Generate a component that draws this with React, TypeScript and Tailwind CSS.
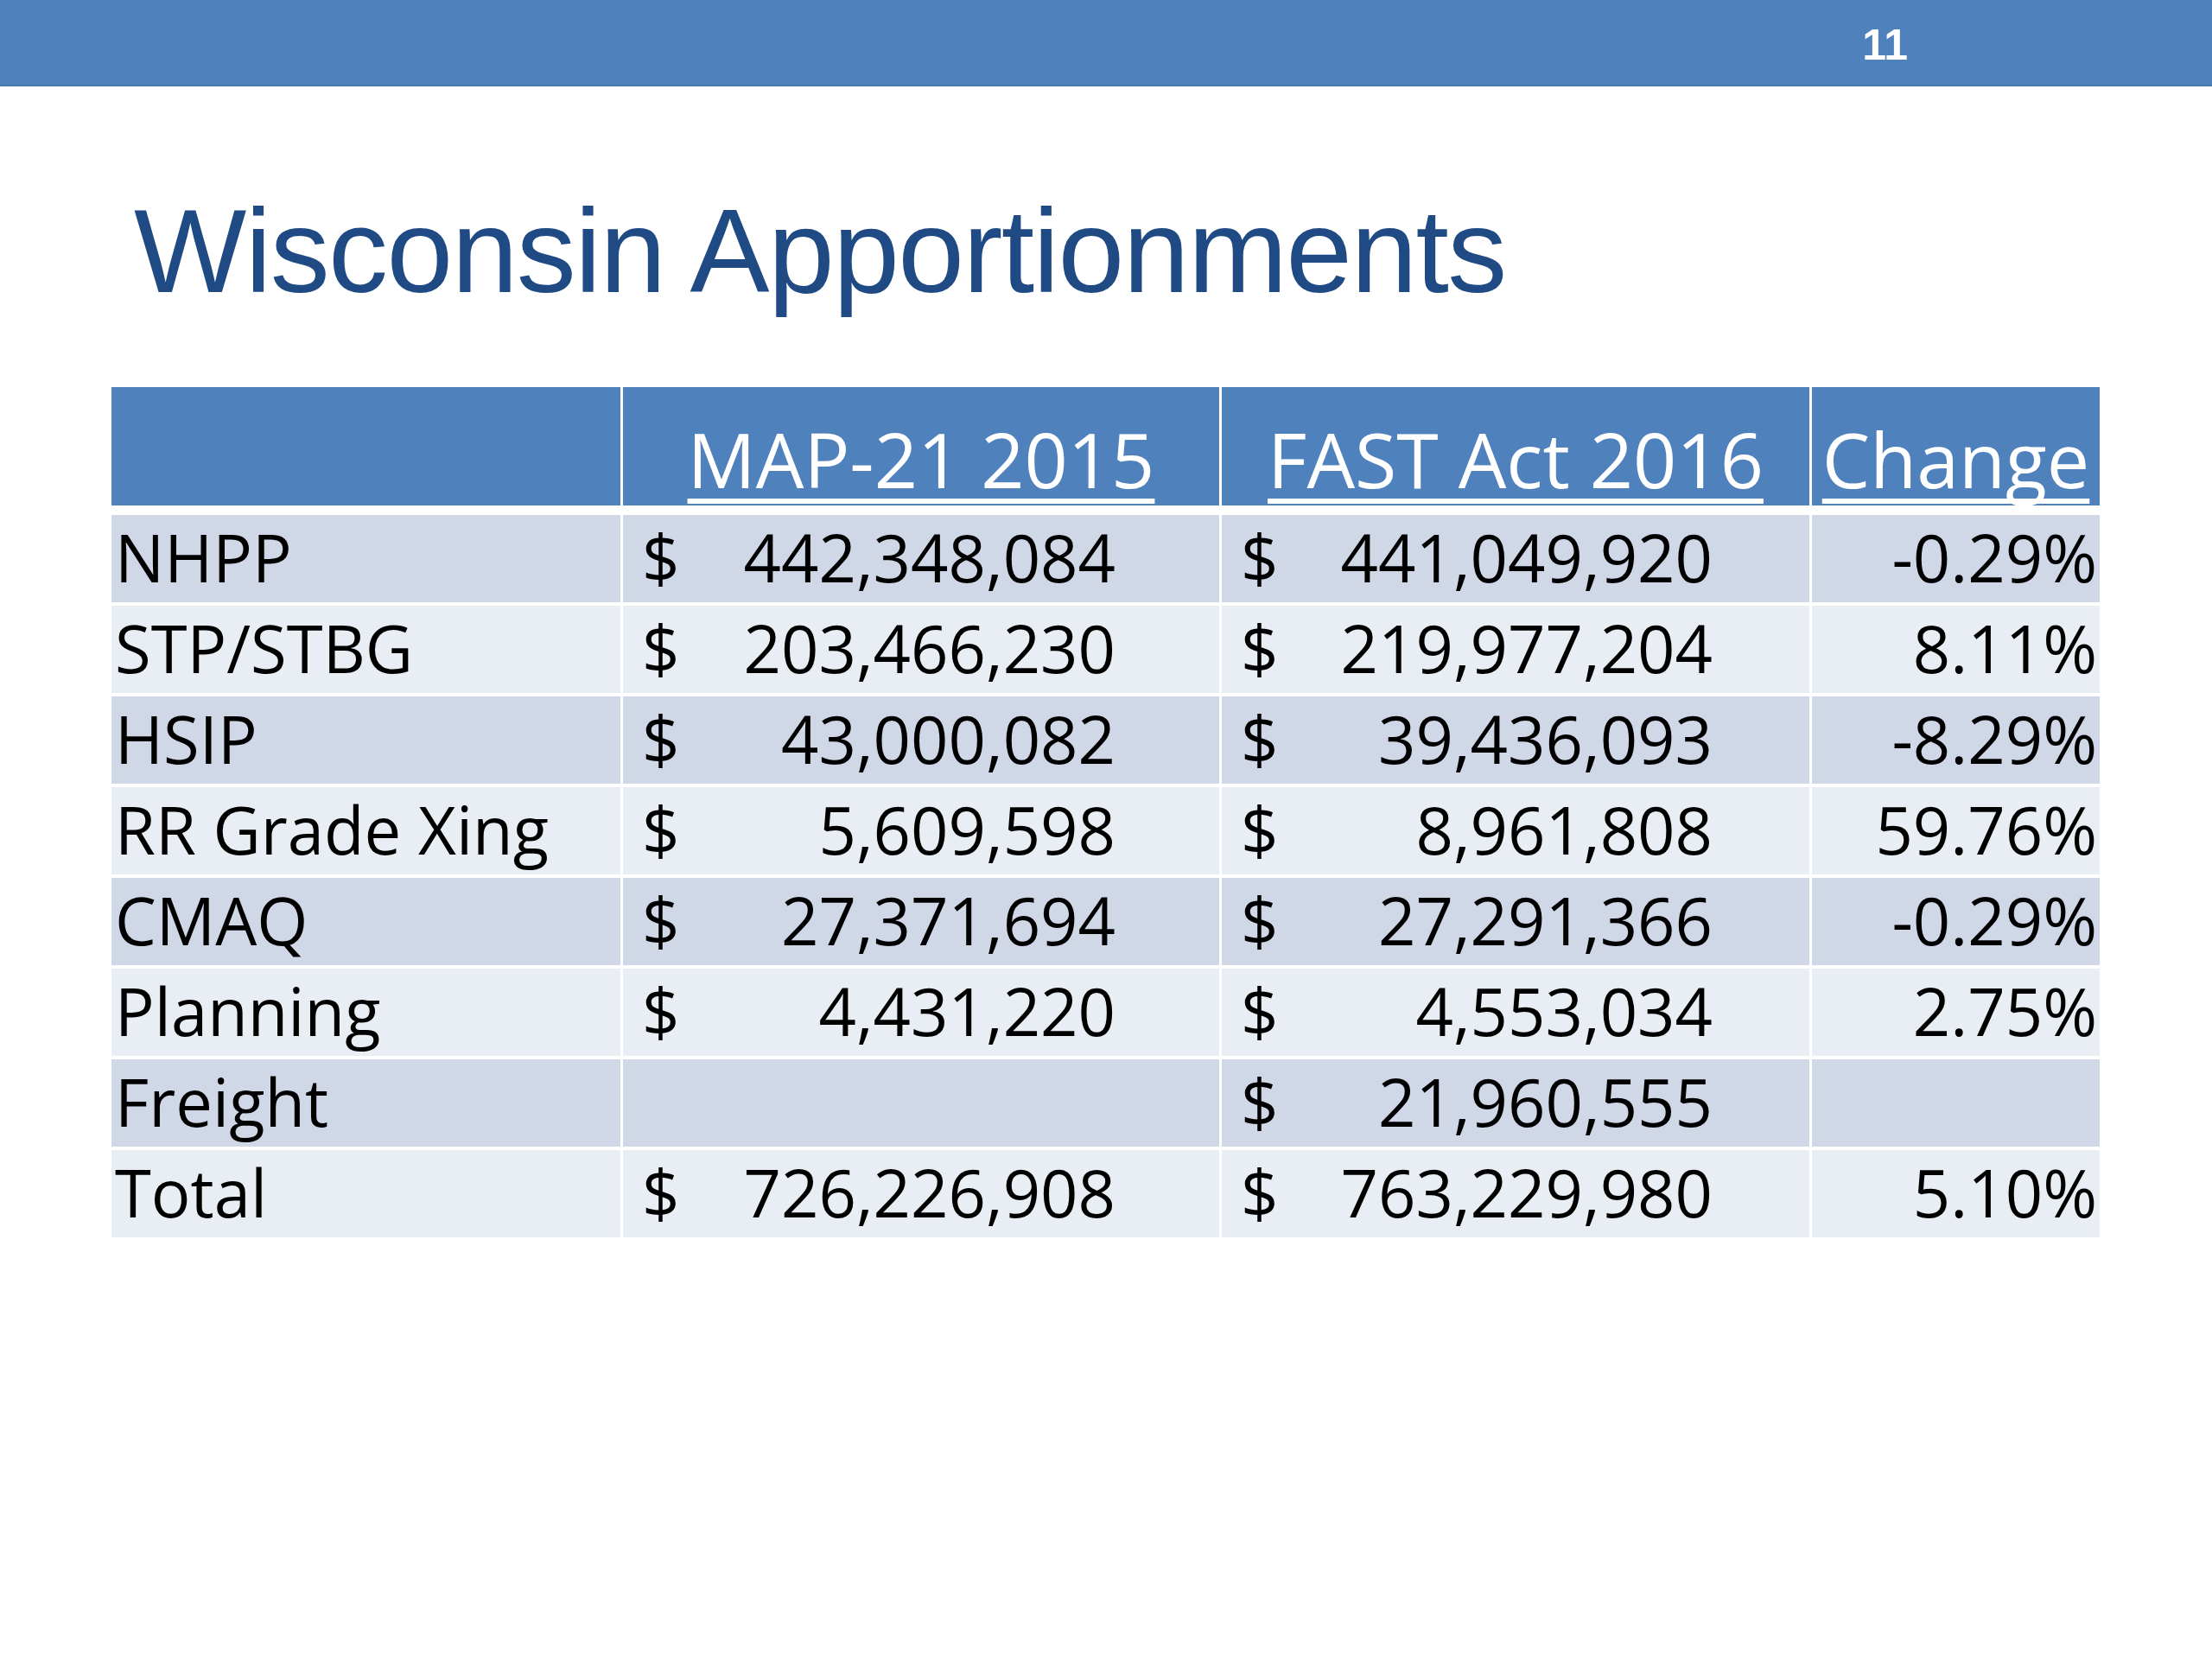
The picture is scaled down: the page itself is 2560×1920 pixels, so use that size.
import React from 'react';

type Row = { label: string; map: string; fast: string; change: string };

const rows: Row[] = [
    { label: 'NHPP', map: '442,348,084', fast: '441,049,920', change: '-0.29%' },
    { label: 'STP/STBG', map: '203,466,230', fast: '219,977,204', change: '8.11%' },
    { label: 'HSIP', map: '43,000,082', fast: '39,436,093', change: '-8.29%' },
    { label: 'RR Grade Xing', map: '5,609,598', fast: '8,961,808', change: '59.76%' },
    { label: 'CMAQ', map: '27,371,694', fast: '27,291,366', change: '-0.29%' },
    { label: 'Planning', map: '4,431,220', fast: '4,553,034', change: '2.75%' },
    { label: 'Freight', map: '', fast: '21,960,555', change: '' },
    { label: 'Total', map: '726,226,908', fast: '763,229,980', change: '5.10%' },
];

const cols = 'grid grid-cols-[589px_690px_680px_333px] gap-x-[3px]';

const MoneyCell: React.FC<{ value: string; right: string; bg: string }> = ({ value, right, bg }) => (
    <div className={`${bg} flex items-center justify-between pl-[22px] ${right} pb-[4px]`}>
        {value && (
            <>
                <span>$</span>
                <span>{value}</span>
            </>
        )}
    </div>
);

export default function App() {
    return (
        <div className="w-[2560px] h-[1920px] bg-white">
            <div className="h-[100px] bg-[#4f81bd] border-b-2 border-[#4a78b0] flex justify-end pr-[352px] pt-[27px]">
                <span className="font-['Liberation_Sans',Arial,sans-serif] font-bold text-[50px] leading-none text-white">11</span>
            </div>

            <h1 className="mt-[121px] pl-[155px] font-['Liberation_Sans',Arial,sans-serif] text-[138px] leading-none tracking-[-1.6px] text-[#1f4a84]">
                Wisconsin Apportionments
            </h1>

            <div className="mt-[89px] ml-[129px] w-[2301px] font-['Open_Sans',sans-serif] text-black">
                <div className={`${cols} h-[137px] text-white text-[88px] leading-none`}>
                    <div className="bg-[#4f81bd]" />
                    {['MAP-21 2015', 'FAST Act 2016', 'Change'].map((h) => (
                        <div key={h} className="bg-[#4f81bd] flex items-end justify-center pb-[10px]">
                            <span className="underline decoration-[6px] underline-offset-[12px] [text-decoration-skip-ink:none]">{h}</span>
                        </div>
                    ))}
                </div>

                <div className="mt-[11px] flex flex-col gap-y-[4px] text-[76px] leading-none">
                    {rows.map((r, i) => {
                        const bg = i % 2 === 0 ? 'bg-[#d0d8e8]' : 'bg-[#e9edf4]';
                        return (
                            <div key={r.label} className={`${cols} h-[101px]`}>
                                <div className={`${bg} flex items-center pl-[4px] pb-[4px]`}>{r.label}</div>
                                <MoneyCell value={r.map} right="pr-[120px]" bg={bg} />
                                <MoneyCell value={r.fast} right="pr-[112px]" bg={bg} />
                                <div className={`${bg} flex items-center justify-end pr-[3px] pb-[4px]`}>{r.change}</div>
                            </div>
                        );
                    })}
                </div>
            </div>
        </div>
    );
}
